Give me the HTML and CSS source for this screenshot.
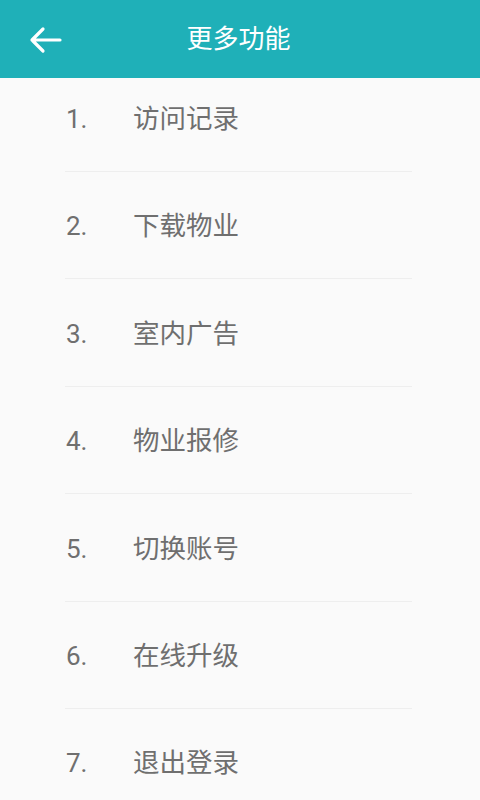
FILE: index.html
```html
<!DOCTYPE html>
<html lang="zh-CN">
<head>
    <meta charset="UTF-8">
    <meta name="viewport" content="width=device-width, initial-scale=1.0">
    <title>更多功能</title>
    <link rel="stylesheet" href="styles.css">
</head>
<body>
    <div class="header">
        <div class="back">
            <svg width="34" height="28" viewBox="0 0 34 28">
                <path d="M32 14 H4 M15 3 L4 14 L15 25" fill="none" stroke="#fff" stroke-width="3.2" stroke-linecap="round" stroke-linejoin="round"/>
            </svg>
        </div>
        <div class="title">更多功能</div>
    </div>
    <ul class="menu">
        <li class="item"><span class="num">1.</span><span class="label">访问记录</span></li>
        <li class="item"><span class="num">2.</span><span class="label">下载物业</span></li>
        <li class="item"><span class="num">3.</span><span class="label">室内广告</span></li>
        <li class="item"><span class="num">4.</span><span class="label">物业报修</span></li>
        <li class="item"><span class="num">5.</span><span class="label">切换账号</span></li>
        <li class="item"><span class="num">6.</span><span class="label">在线升级</span></li>
        <li class="item"><span class="num">7.</span><span class="label">退出登录</span></li>
    </ul>
</body>
</html>
```

FILE: styles.css
```css
body {
    margin: 0;
    padding: 0;
    background-color: #fafafa;
    font-family: Roboto, "Noto Sans CJK SC", sans-serif;
    overflow: hidden;
}
.header {
    height: 78px;
    background-color: #1fb0b8;
    display: flex;
    align-items: center;
    position: relative;
}
.back {
    width: 34px;
    height: 28px;
    margin-left: 28px;
    margin-top: 1px;
}
.title {
    position: absolute;
    left: 0;
    right: 0;
    text-align: center;
    color: #fff;
    font-size: 26px;
    margin-left: -3px;
    top: 22px;
    line-height: 34px;
    pointer-events: none;
}
.menu {
    list-style: none;
    margin: 0;
    padding: 0 68px 0 65px;
}
.item {
    height: 106.4px;
    border-bottom: 1px solid #eeeeee;
    display: flex;
    align-items: flex-end;
    color: #6f6f6f;
    font-size: 26.5px;
}
.item:first-child {
    height: 93px;
}
.item span {
    line-height: 34px;
    margin-bottom: 35px;
}
.num {
    width: 67px;
    padding-left: 1px;
    font-size: 26px;
}
```
